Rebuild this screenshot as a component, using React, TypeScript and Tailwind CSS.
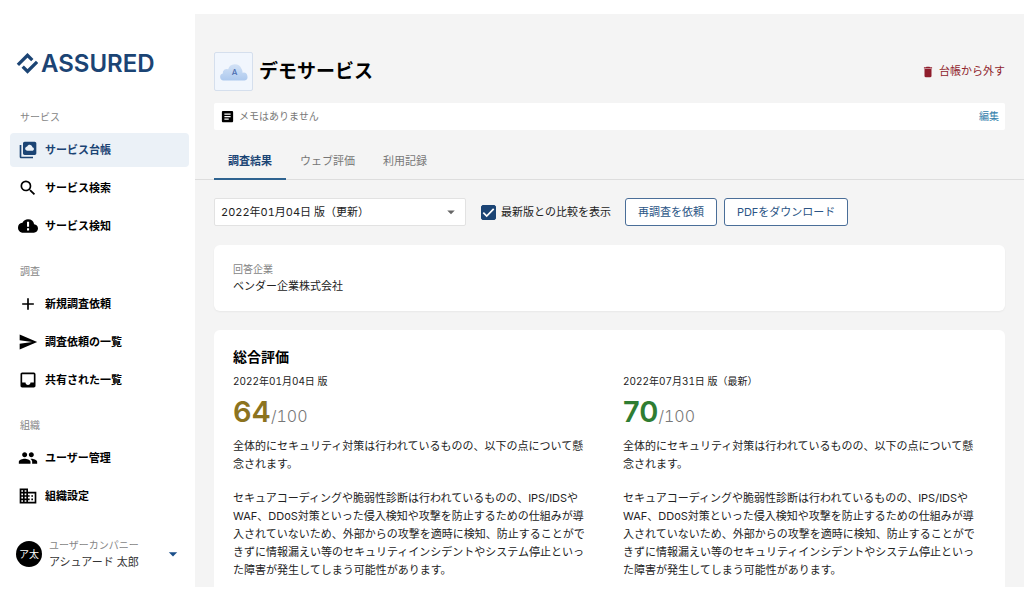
import React, { useState } from "react";
import {
  MdAdd,
  MdArrowDropDown,
  MdArticle,
  MdBusiness,
  MdDelete,
  MdInbox,
  MdPeople,
  MdSearch,
  MdSend,
} from "react-icons/md";

function LogoMark() {
  return (
    <svg viewBox="0 0 22 22" className="h-[22px] w-[22px] shrink-0" fill="none" stroke="#1b4474" strokeWidth="3.3" aria-hidden="true">
      <path d="M1.900 11.900 11.500 2.300l4.800 4.800" />
      <path d="M21.100 8.900 11.500 18.500l-4.800-4.800" />
    </svg>
  );
}

function LedgerIcon() {
  return (
    <svg viewBox="0 0 24 24" width="20" height="20" fill="currentColor" aria-hidden="true">
      <path d="M4 6H2v14c0 1.100.9 2 2 2h14v-2H4V6z" />
      <path
        fillRule="evenodd"
        d="M8 2h12c1.100 0 2 .9 2 2v12c0 1.100-.9 2-2 2H8c-1.100 0-2-.9-2-2V4c0-1.100.9-2 2-2zm9.300 6.700C17 7 15.600 5.800 14 5.800c-1.300 0-2.400.7-3 1.900-1.400.2-2.400 1.300-2.400 2.600 0 1.500 1.200 2.700 2.700 2.700h5.600c1.200 0 2.200-1 2.200-2.200s-.8-2.100-1.800-2.100z"
      />
    </svg>
  );
}

function CloudAlertIcon() {
  return (
    <svg viewBox="0 0 24 24" width="20" height="20" fill="currentColor" aria-hidden="true">
      <path
        fillRule="evenodd"
        d="M19.350 10.040A7.490 7.490 0 0 0 12 4C9.110 4 6.600 5.640 5.350 8.040A5.994 5.994 0 0 0 0 14c0 3.310 2.690 6 6 6h13c2.760 0 5-2.240 5-5 0-2.640-2.050-4.780-4.650-4.960zM10.800 7h2.500v6h-2.500V7zm0 7.800h2.500v2.500h-2.500v-2.500z"
      />
    </svg>
  );
}

type NavItem = { label: string; icon: React.ReactNode; active?: boolean };

const sections: { title: string; items: NavItem[] }[] = [
  {
    title: "サービス",
    items: [
      { label: "サービス台帳", icon: <LedgerIcon />, active: true },
      { label: "サービス検索", icon: <MdSearch size={20} /> },
      { label: "サービス検知", icon: <CloudAlertIcon /> },
    ],
  },
  {
    title: "調査",
    items: [
      { label: "新規調査依頼", icon: <MdAdd size={20} /> },
      { label: "調査依頼の一覧", icon: <MdSend size={20} /> },
      { label: "共有された一覧", icon: <MdInbox size={20} /> },
    ],
  },
  {
    title: "組織",
    items: [
      { label: "ユーザー管理", icon: <MdPeople size={20} /> },
      { label: "組織設定", icon: <MdBusiness size={20} /> },
    ],
  },
];

function Sidebar() {
  return (
    <aside className="flex w-[195px] shrink-0 flex-col pl-2.5 pr-1.5 pt-9">
      <a href="#" className="flex items-center gap-[3px] pl-1.5 text-[24px] leading-7 font-semibold text-[#1b4474]">
        <LogoMark />
        ASSURED
      </a>
      <nav className="mt-[31px] flex flex-col gap-5">
        {sections.map((section) => (
          <div key={section.title}>
            <h2 className="pl-2.5 text-[10px] leading-4 text-[#858585]">{section.title}</h2>
            <ul className="mt-2 flex flex-col gap-1">
              {section.items.map((item) => (
                <li key={item.label}>
                  <a
                    href="#"
                    className={
                      item.active
                        ? "flex h-[34px] items-center gap-[7px] rounded bg-[#ebf1f7] pl-2 text-[11px] font-bold text-[#1b4474]"
                        : "flex h-[34px] items-center gap-[7px] rounded pl-2 text-[11px] font-bold text-black"
                    }
                  >
                    {item.icon}
                    {item.label}
                  </a>
                </li>
              ))}
            </ul>
          </div>
        ))}
      </nav>
      <button type="button" className="mt-6 flex items-center pl-1.5 text-left">
        <span className="grid h-[26px] w-[26px] shrink-0 place-items-center rounded-full bg-black text-[10px] text-white">
          ア太
        </span>
        <span className="ml-[7px] flex-1">
          <span className="block text-[10px] leading-[17px] text-[#858585]">ユーザーカンパニー</span>
          <span className="block text-[11px] leading-[17px] text-[#333333]">アシュアード 太郎</span>
        </span>
        <MdArrowDropDown size={20} className="mr-1.5 text-[#1b4f8a]" />
      </button>
    </aside>
  );
}

function ServiceIcon() {
  return (
    <span className="grid h-[39px] w-[39px] place-items-center rounded-xs border border-[#d5dfed] bg-[#f1f6fd]">
      <svg viewBox="0 0 30 20" width="30" height="20" aria-hidden="true">
        <defs>
          <linearGradient id="cloud" x1="0" y1="0" x2="0" y2="1">
            <stop offset="0" stopColor="#d3e2f6" />
            <stop offset="1" stopColor="#adc9ee" />
          </linearGradient>
        </defs>
        <path
          fill="url(#cloud)"
          d="M4.500 18.500a3.500 3.500 0 0 1-.7-6.900 4 4 0 0 1 5.400-4.400A7 7 0 0 1 22.300 6.500c.9 1.300 1.300 2.800 1.200 4.300a3.900 3.900 0 0 1 2 7.700z"
        />
        <text x="15.500" y="13" textAnchor="middle" fontSize="8" fontWeight="500" fill="#4a6bb0">
          A
        </text>
      </svg>
    </span>
  );
}

const summary = [
  "全体的にセキュリティ対策は行われているものの、以下の点について懸念されます。",
  "セキュアコーディングや脆弱性診断は行われているものの、IPS/IDSやWAF、DDoS対策といった侵入検知や攻撃を防止するための仕組みが導入されていないため、外部からの攻撃を適時に検知、防止することができずに情報漏えい等のセキュリティインシデントやシステム停止といった障害が発生してしまう可能性があります。",
];

function Score({ date, value, tone }: { date: string; value: number; tone: string }) {
  return (
    <section>
      <p className="text-[10px] leading-4">{date}</p>
      <p className="mt-[5px] flex items-baseline leading-9">
        <span className={tone}>{value}</span>
        <span className="text-[16px] font-light text-[#777777]">/100</span>
      </p>
      <div className="mt-[3px] flex flex-col gap-4 pr-4 text-[11px] leading-[18px]">
        {summary.map((text) => (
          <p key={text}>{text}</p>
        ))}
      </div>
    </section>
  );
}

const tabs = ["調査結果", "ウェブ評価", "利用記録"];

export default function App() {
  const [tab, setTab] = useState(tabs[0]);
  const [compare, setCompare] = useState(true);

  return (
    <div className="flex min-h-screen bg-white pt-3.5 pr-1.5 pb-[7px] font-['Inter','Noto_Sans_CJK_JP',sans-serif] text-[#222222] tabular-nums" lang="ja">
      <Sidebar />
      <main className="min-w-0 flex-1 bg-[#f4f4f4] pt-[38px]">
        <header className="flex items-center px-[19px]">
          <ServiceIcon />
          <h1 className="ml-1.5 flex-1 text-[19px] leading-7 font-bold text-black">デモサービス</h1>
          <button type="button" className="flex items-center gap-1 text-[11px] text-[#8f1d2c]">
            <MdDelete size={14} />
            台帳から外す
          </button>
        </header>

        <div className="mx-[19px] mt-3 flex h-[27px] items-center rounded-xs bg-white px-1.5">
          <MdArticle size={15} className="text-black" />
          <p className="ml-1 flex-1 text-[10px] text-[#777777]">メモはありません</p>
          <button type="button" className="text-[10px] text-[#3480ab]">編集</button>
        </div>

        <div role="tablist" className="mt-3 flex border-b border-[#dddddd] px-[19px]">
          {tabs.map((name) => (
            <button
              key={name}
              type="button"
              role="tab"
              aria-selected={tab === name}
              onClick={() => setTab(name)}
              className={
                tab === name
                  ? "-mb-px h-[38px] border-b-2 border-[#2f6390] px-3.5 pt-0.5 text-[11px] font-bold text-[#1b4474]"
                  : "-mb-px h-[38px] border-b-2 border-transparent px-3.5 pt-0.5 text-[11px] text-[#777777]"
              }
            >
              {name}
            </button>
          ))}
        </div>

        <div className="mt-[18px] flex items-center px-[19px] text-[11px]">
          <div className="relative w-[252px]">
            <select
              aria-label="版"
              className="h-7 w-full appearance-none rounded-xs border border-[#e2e2e2] bg-white px-1.5 text-[11px]"
            >
              <option>2022年01月04日 版（更新）</option>
              <option>2022年07月31日 版（最新）</option>
            </select>
            <MdArrowDropDown size={18} className="pointer-events-none absolute top-[5px] right-1.5 text-[#666666]" />
          </div>
          <label className="ml-[15px] flex items-center gap-[5px]">
            <span className="grid">
              <input
                type="checkbox"
                checked={compare}
                onChange={(e) => setCompare(e.target.checked)}
                className="peer col-start-1 row-start-1 h-[15px] w-[15px] appearance-none rounded-xs border border-[#1b4474] bg-white checked:bg-[#1b4474]"
              />
              <svg viewBox="0 0 15 15" className="pointer-events-none invisible col-start-1 row-start-1 h-[15px] w-[15px] peer-checked:visible" fill="none" stroke="white" strokeWidth="1.7" aria-hidden="true">
                <path d="M2.300 7.600 5.700 11l7-7.200" />
              </svg>
            </span>
            最新版との比較を表示
          </label>
          <button type="button" className="ml-3.5 h-7 rounded-[3px] border border-[#4a6e98] bg-white px-3 text-[#2b5585]">
            再調査を依頼
          </button>
          <button type="button" className="ml-[7px] h-7 rounded-[3px] border border-[#4a6e98] bg-white px-3 text-[#2b5585]">
            PDFをダウンロード
          </button>
        </div>

        <dl className="mx-[19px] mt-[19px] rounded-md bg-white px-[19px] py-4 shadow-xs">
          <dt className="text-[10px] leading-4 text-[#858585]">回答企業</dt>
          <dd className="text-[11px] leading-[18px]">ベンダー企業株式会社</dd>
        </dl>

        <div className="mx-[19px] mt-[19px] rounded-t-md bg-white pt-4 pr-3 pb-2 pl-[19px]">
          <h2 className="text-[14px] leading-[22px] font-bold text-black">総合評価</h2>
          <div className="mt-[5px] grid grid-cols-2 gap-5">
            <Score date="2022年01月04日 版" value={64} tone="text-[29px] font-semibold proportional-nums text-[#8c731f]" />
            <Score date="2022年07月31日 版（最新）" value={70} tone="text-[29px] font-semibold proportional-nums text-[#2f7d32]" />
          </div>
        </div>
      </main>
    </div>
  );
}
